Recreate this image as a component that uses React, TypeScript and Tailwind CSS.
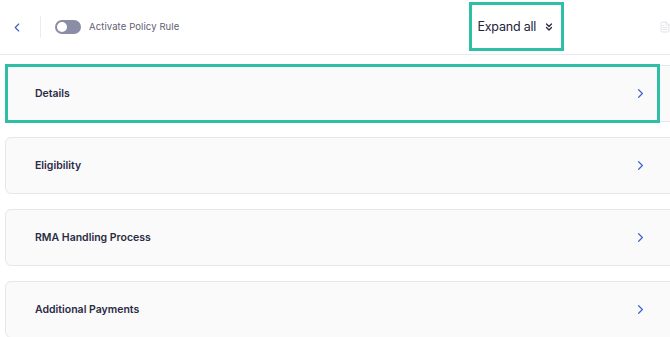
import React from 'react';
import { ChevronLeft, ChevronRight, ChevronsDown, FileText } from 'lucide-react';

const sections = ['Details', 'Eligibility', 'RMA Handling Process', 'Additional Payments'];

export default function App() {
  return (
    <div className="relative w-[670px] h-[337px] overflow-hidden bg-white font-['Inter',sans-serif]">
      <div className="w-[700px]">
        {/* Header */}
        <div className="h-[55px] border-b border-[#e8e8f0] flex items-center">
          <button className="ml-[10px] w-[14px] flex justify-center text-[#3f63c9]">
            <ChevronLeft size={15} strokeWidth={2} />
          </button>
          <div className="ml-[16px] h-[22px] w-px bg-[#ececf2]" />
          <div className="ml-[14px] w-[26px] h-[14px] rounded-full bg-[#8b8ca6] p-[2px] flex items-center">
            <div className="w-[10px] h-[10px] rounded-full bg-white" />
          </div>
          <span className="ml-[8px] text-[9.5px] text-[#5f6074] tracking-[0.1px]">Activate Policy Rule</span>
          <div className="ml-[298px] flex items-center gap-[7px] text-[12.5px] text-[#22223a] tracking-[-0.2px]">
            <span>Expand all</span>
            <ChevronsDown size={12} strokeWidth={2.6} className="text-[#2a2a48]" />
          </div>
          <FileText size={12} strokeWidth={1.5} className="ml-[104px] text-[#d9dae3]" />
        </div>

        {/* Sections */}
        <div className="pt-[10px] pl-[5px] pr-[5px] flex flex-col gap-[15px]">
          {sections.map((title) => (
            <div
              key={title}
              className="h-[57px] rounded-[6px] border border-[#e6e6ee] bg-[#fafafa] flex items-center justify-between pl-[29px] pr-[46px]"
            >
              <span className="text-[10.5px] font-semibold text-[#2b2b45]">{title}</span>
              <ChevronRight size={15} strokeWidth={2} className="text-[#4567cf]" />
            </div>
          ))}
        </div>
      </div>

      {/* Highlight annotations */}
      <div className="absolute left-[469px] top-[2px] w-[95px] h-[49px] border-[3px] border-[#2ebfa6]" />
      <div className="absolute left-[5px] top-[64px] w-[655px] h-[59px] border-[3px] border-[#2ebfa6]" />
    </div>
  );
}
